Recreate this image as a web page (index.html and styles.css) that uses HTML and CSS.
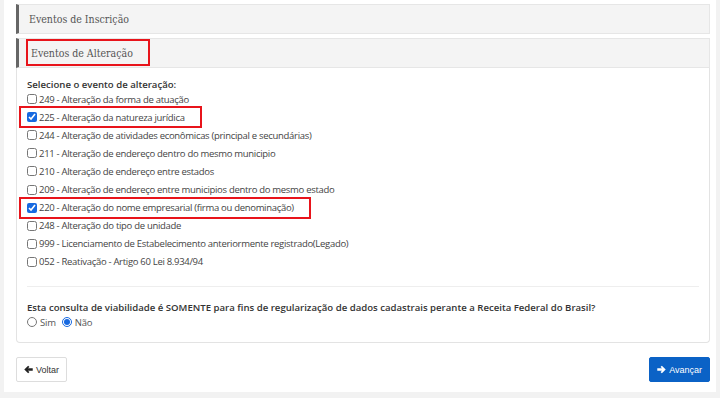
FILE: index.html
```html
<!DOCTYPE html>
<html lang="pt-BR">
<head>
    <meta charset="UTF-8">
    <meta name="viewport" content="width=device-width, initial-scale=1.0">
    <title>Eventos</title>
    <link rel="stylesheet" href="styles.css">
</head>
<body>
    <div class="page">
        <div class="panel">
            <div class="panel-header"><span class="title">Eventos de Inscrição</span></div>
        </div>
        <div class="panel">
            <div class="panel-header"><span class="title marked">Eventos de Alteração</span></div>
            <div class="panel-body">
                <p class="label first">Selecione o evento de alteração:</p>
                <label class="item"><input type="checkbox"> 249 - Alteração da forma de atuação</label>
                <label class="item marked"><input type="checkbox" checked> 225 - Alteração da natureza jurídica</label>
                <label class="item"><input type="checkbox"> 244 - Alteração de atividades econômicas (principal e secundárias)</label>
                <label class="item"><input type="checkbox"> 211 - Alteração de endereço dentro do mesmo municipio</label>
                <label class="item"><input type="checkbox"> 210 - Alteração de endereço entre estados</label>
                <label class="item"><input type="checkbox"> 209 - Alteração de endereço entre municipios dentro do mesmo estado</label>
                <label class="item marked"><input type="checkbox" checked> 220 - Alteração do nome empresarial (firma ou denominação)</label>
                <label class="item"><input type="checkbox"> 248 - Alteração do tipo de unidade</label>
                <label class="item"><input type="checkbox"> 999 - Licenciamento de Estabelecimento anteriormente registrado(Legado)</label>
                <label class="item"><input type="checkbox"> 052 - Reativação - Artigo 60 Lei 8.934/94</label>
                <hr class="sep">
                <p class="label">Esta consulta de viabilidade é SOMENTE para fins de regularização de dados cadastrais perante a Receita Federal do Brasil?</p>
                <div class="radios">
                    <label class="radio"><input type="radio" name="rfb"> Sim</label>
                    <label class="radio"><input type="radio" name="rfb" checked> Não</label>
                </div>
            </div>
        </div>
        <div class="actions">
            <button class="btn">
                <svg width="9" height="9" viewBox="0 0 10 10"><path d="M0.3 5 L4.6 0.7 L6.1 2.2 L4.3 3.7 H9.7 V6.3 H4.3 L6.1 7.8 L4.6 9.3 Z" fill="#222"/></svg>
                Voltar
            </button>
            <button class="btn primary">
                <svg width="9" height="9" viewBox="0 0 10 10"><path d="M9.7 5 L5.4 0.7 L3.9 2.2 L5.7 3.7 H0.3 V6.3 H5.7 L3.9 7.8 L5.4 9.3 Z" fill="#fff"/></svg>
                Avançar
            </button>
        </div>
    </div>
</body>
</html>
```

FILE: styles.css
```css
*{
    padding: 0;
    margin: 0;
    box-sizing: border-box;
}
body{
    background-color: #f2f2f2;
    font-family: "Open Sans", Arial, sans-serif;
    color: #333;
}
.page{
    background-color: #fff;
    margin: 0 4px 0 4px;
    height: 392px;
    padding: 4px 6px 0 12px;
}
.panel{
    margin-bottom: 4px;
}
.panel-header{
    height: 30px;
    background-color: #f4f4f4;
    border: 1px solid #e6e6e6;
    border-left: 3px solid #666;
    display: flex;
    align-items: center;
    padding-left: 10px;
}
.title{
    font-family: "DejaVu Serif Condensed", "DejaVu Serif", serif;
    font-size: 10.5px;
    color: #555;
}
.title.marked{
    outline: 2px solid #e8141b;
    outline-offset: -2px;
    padding: 8px 17px 7px 5px;
    margin-left: -3px;
    margin-top: -2px;
}
.panel-body{
    border: 1px solid #e3e3e3;
    border-top: none;
    border-radius: 0 0 4px 4px;
    padding: 10px 10px 0;
    height: 275px;
}
.label{
    font-size: 9.6px;
    font-weight: 600;
    color: #333;
}
.label.first{
    margin-bottom: -1px;
}
.item{
    display: flex;
    align-items: center;
    font-size: 9.5px;
    letter-spacing: -0.3px;
    height: 18.1px;
    color: #444;
    width: fit-content;
}
.item.marked{
    outline: 2px solid #e8141b;
    outline-offset: 0;
    padding: 0 15px 0 6px;
    margin-left: -6px;
}
.item input{
    width: 10px;
    height: 10px;
    margin-right: 2px;
    accent-color: #1769e0;
}
.sep{
    border: none;
    border-top: 1px solid #eee;
    margin: 15px 0 14px;
}
.radios{
    display: flex;
    gap: 6px;
    margin-top: 2px;
}
.radio{
    display: flex;
    align-items: center;
    font-size: 9.5px;
    letter-spacing: -0.2px;
    color: #555;
}
.radio input{
    width: 10px;
    height: 10px;
    margin-right: 3px;
    accent-color: #1769e0;
}
.actions{
    display: flex;
    justify-content: space-between;
    margin-top: 14px;
}
.btn{
    display: flex;
    align-items: center;
    gap: 3px;
    height: 25px;
    padding: 0 7px;
    background-color: #fff;
    border: 1px solid #ddd;
    border-radius: 2px;
    font-family: "Liberation Sans", Arial, sans-serif;
    font-size: 9px;
    color: #333;
}
.btn.primary{
    background-color: #0b62c6;
    border-color: #0b62c6;
    color: #fff;
}
```
